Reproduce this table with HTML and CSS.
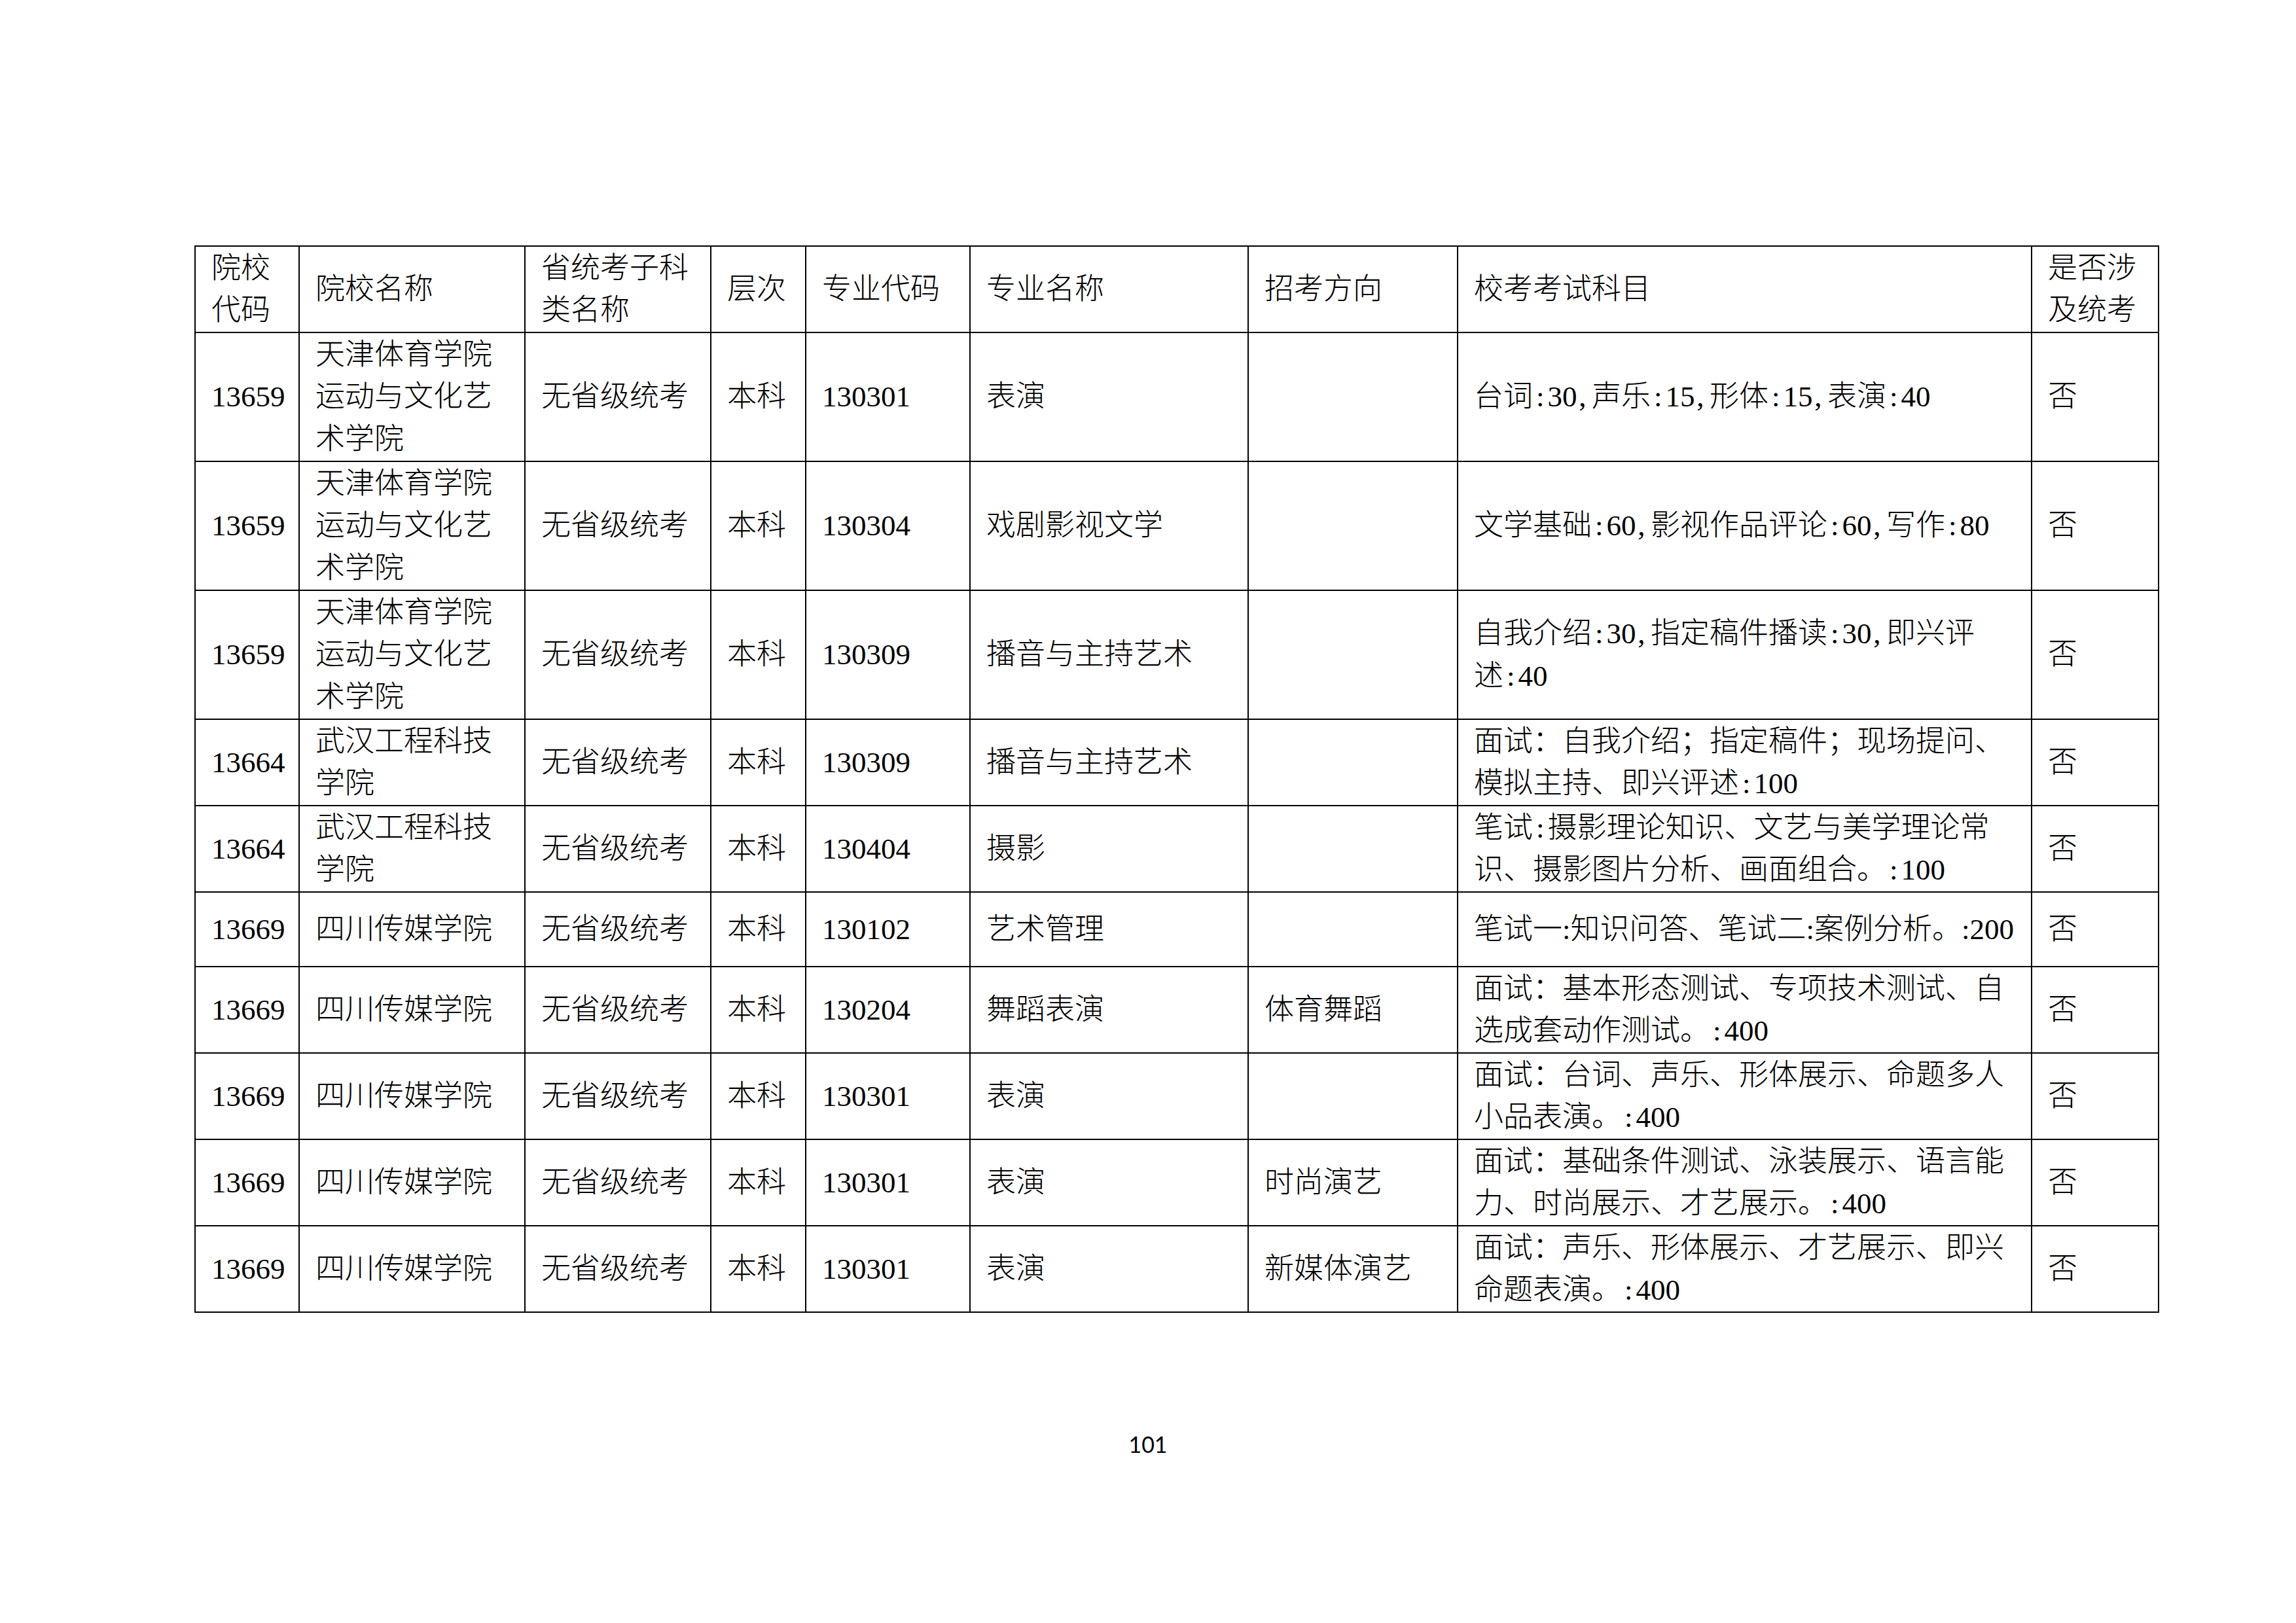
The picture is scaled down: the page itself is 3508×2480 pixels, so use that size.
FILE: index.html
```html
<!DOCTYPE html>
<html lang="zh-CN">
<head>
<meta charset="utf-8">
<title>101</title>
<link rel="stylesheet" href="styles.css">
</head>
<body>
<div class="page">
<table class="grid">
<colgroup>
<col class="c1"><col class="c2"><col class="c3"><col class="c4"><col class="c5"><col class="c6"><col class="c7"><col class="c8"><col class="c9">
</colgroup>
<thead>
<tr class="rh">
<th>院校<br>代码</th>
<th>院校名称</th>
<th>省统考子科<br>类名称</th>
<th>层次</th>
<th>专业代码</th>
<th>专业名称</th>
<th>招考方向</th>
<th>校考考试科目</th>
<th>是否涉<br>及统考</th>
</tr>
</thead>
<tbody>
<tr class="r3">
<td>13659</td>
<td>天津体育学院<br>运动与文化艺<br>术学院</td>
<td>无省级统考</td>
<td>本科</td>
<td>130301</td>
<td>表演</td>
<td></td>
<td>台词<span class="hc">:</span>30<span class="hm">,</span>声乐<span class="hc">:</span>15<span class="hm">,</span>形体<span class="hc">:</span>15<span class="hm">,</span>表演<span class="hc">:</span>40</td>
<td>否</td>
</tr>
<tr class="r3">
<td>13659</td>
<td>天津体育学院<br>运动与文化艺<br>术学院</td>
<td>无省级统考</td>
<td>本科</td>
<td>130304</td>
<td>戏剧影视文学</td>
<td></td>
<td>文学基础<span class="hc">:</span>60<span class="hm">,</span>影视作品评论<span class="hc">:</span>60<span class="hm">,</span>写作<span class="hc">:</span>80</td>
<td>否</td>
</tr>
<tr class="r3">
<td>13659</td>
<td>天津体育学院<br>运动与文化艺<br>术学院</td>
<td>无省级统考</td>
<td>本科</td>
<td>130309</td>
<td>播音与主持艺术</td>
<td></td>
<td>自我介绍<span class="hc">:</span>30<span class="hm">,</span>指定稿件播读<span class="hc">:</span>30<span class="hm">,</span>即兴评<br>述<span class="hc">:</span>40</td>
<td>否</td>
</tr>
<tr class="r2">
<td>13664</td>
<td>武汉工程科技<br>学院</td>
<td>无省级统考</td>
<td>本科</td>
<td>130309</td>
<td>播音与主持艺术</td>
<td></td>
<td>面试<span class="fc">：</span>自我介绍<span class="fc">；</span>指定稿件<span class="fc">；</span>现场提问、<br>模拟主持、即兴评述<span class="hc">:</span>100</td>
<td>否</td>
</tr>
<tr class="r2">
<td>13664</td>
<td>武汉工程科技<br>学院</td>
<td>无省级统考</td>
<td>本科</td>
<td>130404</td>
<td>摄影</td>
<td></td>
<td>笔试<span class="hc">:</span>摄影理论知识、文艺与美学理论常<br>识、摄影图片分析、画面组合。<span class="hc">:</span>100</td>
<td>否</td>
</tr>
<tr class="r1">
<td>13669</td>
<td>四川传媒学院</td>
<td>无省级统考</td>
<td>本科</td>
<td>130102</td>
<td>艺术管理</td>
<td></td>
<td>笔试一:知识问答、笔试二:案例分析。:200</td>
<td>否</td>
</tr>
<tr class="r2">
<td>13669</td>
<td>四川传媒学院</td>
<td>无省级统考</td>
<td>本科</td>
<td>130204</td>
<td>舞蹈表演</td>
<td>体育舞蹈</td>
<td>面试<span class="fc">：</span>基本形态测试、专项技术测试、自<br>选成套动作测试。<span class="hc">:</span>400</td>
<td>否</td>
</tr>
<tr class="r2">
<td>13669</td>
<td>四川传媒学院</td>
<td>无省级统考</td>
<td>本科</td>
<td>130301</td>
<td>表演</td>
<td></td>
<td>面试<span class="fc">：</span>台词、声乐、形体展示、命题多人<br>小品表演。<span class="hc">:</span>400</td>
<td>否</td>
</tr>
<tr class="r2">
<td>13669</td>
<td>四川传媒学院</td>
<td>无省级统考</td>
<td>本科</td>
<td>130301</td>
<td>表演</td>
<td>时尚演艺</td>
<td>面试<span class="fc">：</span>基础条件测试、泳装展示、语言能<br>力、时尚展示、才艺展示。<span class="hc">:</span>400</td>
<td>否</td>
</tr>
<tr class="r2">
<td>13669</td>
<td>四川传媒学院</td>
<td>无省级统考</td>
<td>本科</td>
<td>130301</td>
<td>表演</td>
<td>新媒体演艺</td>
<td>面试<span class="fc">：</span>声乐、形体展示、才艺展示、即兴<br>命题表演。<span class="hc">:</span>400</td>
<td>否</td>
</tr>
</tbody>
</table>
<div class="page-no">101</div>
</div>
</body>
</html>
```
FILE: styles.css
```css
html, body {
  margin: 0;
  padding: 0;
  background: #ffffff;
}

.page {
  width: 3508px;
  height: 2480px;
  padding-top: 375px;
  box-sizing: border-box;
  color: #000000;
  font-family: "Liberation Serif", "Noto Sans CJK SC", serif;
}

.grid {
  border-collapse: collapse;
  table-layout: fixed;
  width: 3000px;
  margin-left: 297px;
}

.c1 { width: 159px; }
.c2 { width: 345px; }
.c3 { width: 284px; }
.c4 { width: 145px; }
.c5 { width: 251px; }
.c6 { width: 425px; }
.c7 { width: 320px; }
.c8 { width: 877px; }
.c9 { width: 194px; }

.grid th,
.grid td {
  border: 2px solid #000000;
  padding: 0 8px 0 24px;
  vertical-align: middle;
  text-align: left;
  font-weight: 300;
  font-size: 45px;
  line-height: 64.5px;
  white-space: nowrap;
}

/* half-width ASCII punctuation set in a half-em box, as in the source font */
.hc,
.hm {
  display: inline-block;
  width: 0.5em;
}

.hc { text-align: center; }
.hm { text-indent: 0.06em; }

/* full-width colon / semicolon centred in their em box;
   the smaller line-height keeps its box inside the row's line box */
.fc {
  font-family: "Noto Sans CJK TC", "Noto Sans CJK SC", sans-serif;
  line-height: 55px;
}

.rh { height: 132px; }
.r3 { height: 197px; }
.r2 { height: 132px; }
.r1 { height: 114px; }

.page-no {
  margin-top: 184px;
  text-align: center;
  font-family: Lato, "Liberation Sans", sans-serif;
  font-size: 34px;
  line-height: 34px;
}
```
